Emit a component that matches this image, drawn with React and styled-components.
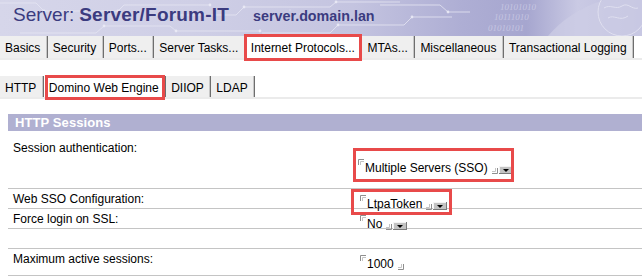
import React from "react";
import styled, { createGlobalStyle, css } from "styled-components";

const GlobalStyle = createGlobalStyle`
  html, body { margin: 0; padding: 0; background: #fff; }
  body {
    font-family: "Liberation Sans", Arial, sans-serif;
    font-size: 12px;
    color: #000;
    width: 642px;
    height: 277px;
    overflow: hidden;
  }
`;

const Page = styled.div`
  width: 642px;
`;

const Banner = styled.header`
  position: relative;
  height: 36px;
  overflow: hidden;
  background: linear-gradient(
    90deg,
    #d6d6ea 0%,
    #cfcfe6 30%,
    #c4c4e0 55%,
    #aeaed4 72%,
    #a6a6cf 82%,
    #cacae4 90%,
    #bcbcdc 100%
  );
`;

const BannerArt = styled.svg`
  position: absolute;
  inset: 0;
`;

const Title = styled.h1`
  position: relative;
  margin: 0;
  padding: 5px 0 0 13px;
  display: flex;
  align-items: baseline;
  font-size: 19px;
  line-height: 19px;
  font-weight: normal;
  color: #3b3b7f;
  white-space: nowrap;
`;

const TitleName = styled.b`
  font-weight: bold;
  margin-left: 5px;
  letter-spacing: 0.2px;
`;

const TitleHost = styled.b`
  font-weight: bold;
  font-size: 14.3px;
  margin-left: 24px;
`;

const TabBar = styled.nav`
  display: flex;
  height: ${(p) => p.$h}px;
  margin-top: ${(p) => p.$mt}px;
  border-bottom: 2px solid #ebebeb;
`;

const Tab = styled.div`
  position: relative;
  padding: 3px 6.5px 0 5px;
  font-size: 12px;
  line-height: 18px;
  white-space: nowrap;
  background: ${(p) => (p.$active ? "#ffffff" : "#efefef")};
  border-right: 1px solid #6e6e6e;
  box-shadow: inset -1px 0 0 #c6c6c6;
  ${(p) =>
    p.$mark &&
    css`
      &::after {
        content: "";
        position: absolute;
        inset: ${p.$mark};
        border: 3px solid #e84a4a;
        pointer-events: none;
      }
    `}
`;

const Section = styled.section`
  margin: 15px 0 0 8px;
`;

const SectionHead = styled.h2`
  margin: 0;
  height: 17px;
  line-height: 17px;
  padding-left: 7px;
  background: #b0b0d1;
  color: #ffffff;
  font-size: 13px;
  font-weight: bold;
  letter-spacing: 0.1px;
`;

const Row = styled.div`
  display: grid;
  grid-template-columns: 343px 1fr;
  height: ${(p) => p.$h}px;
  border-bottom: 1px solid #c4c4c4;
`;

const Label = styled.div`
  padding: ${(p) => p.$pt}px 0 0 5px;
  line-height: 14px;
  white-space: nowrap;
`;

const Value = styled.div`
  padding: ${(p) => p.$pt}px 0 0 ${(p) => p.$pl}px;
`;

const Field = styled.span`
  position: relative;
  display: inline-flex;
  align-items: flex-end;
  height: 16px;
  ${(p) =>
    p.$mark &&
    css`
      &::after {
        content: "";
        position: absolute;
        inset: ${p.$mark};
        border: 3px solid #e84a4a;
        pointer-events: none;
      }
    `}
`;

const FieldText = styled.span`
  line-height: 14px;
  margin-left: 1px;
  white-space: nowrap;
`;

const CornerTL = styled.svg`
  align-self: flex-start;
  flex: none;
`;

const CornerBR = styled.svg`
  flex: none;
  margin: 0 0 1px 4px;
`;

const DropButton = styled.span`
  flex: none;
  display: flex;
  align-items: center;
  justify-content: center;
  width: 14px;
  height: 8px;
  margin: 0 0 1px 1px;
  background: #c3c3c3;
  box-shadow: inset -1px -1px 0 #7a7a7a, inset 1px 1px 0 #f4f4f4;

  &::before {
    content: "";
    width: 0;
    height: 0;
    border-left: 3px solid transparent;
    border-right: 3px solid transparent;
    border-top: 3px solid #000;
  }
`;

function TopLeftMark() {
  return (
    <CornerTL width="6" height="6" viewBox="0 0 6 6">
      <path d="M0.5 6V0.5H6" stroke="#8e8e8e" fill="none" />
      <path d="M2.5 6V2.5H6" stroke="#c4c4c4" fill="none" />
    </CornerTL>
  );
}

function BottomRightMark() {
  return (
    <CornerBR width="6" height="6" viewBox="0 0 6 6">
      <path d="M0 5.5H5.5V0" stroke="#8e8e8e" fill="none" />
      <path d="M0 3.5H3.5V0" stroke="#c4c4c4" fill="none" />
    </CornerBR>
  );
}

function NotesField({ text, dropdown, mark }) {
  return (
    <Field $mark={mark}>
      <TopLeftMark />
      <FieldText>{text}</FieldText>
      <BottomRightMark />
      {dropdown && <DropButton />}
    </Field>
  );
}

function BannerDecoration() {
  return (
    <BannerArt width="642" height="36" viewBox="0 0 642 36">
      <g stroke="#e6e6f3" strokeWidth="1" fill="none" opacity="0.8">
        <path d="M0 3H36L44 11H118L124 5H210" />
        <path d="M20 33H96L104 26H170L176 31H260" />
        <path d="M150 15H236L244 7H330L336 2H400" />
        <path d="M262 33H330L338 25H404L412 17H452" />
        <path d="M380 5H440L448 12H470" />
        <path d="M330 20H372" />
      </g>
      <g fill="#ececf7" opacity="0.85">
        <circle cx="44" cy="11" r="1.4" />
        <circle cx="118" cy="11" r="1.4" />
        <circle cx="104" cy="26" r="1.4" />
        <circle cx="176" cy="31" r="1.4" />
        <circle cx="244" cy="7" r="1.4" />
        <circle cx="336" cy="2" r="1.4" />
        <circle cx="338" cy="25" r="1.4" />
        <circle cx="412" cy="17" r="1.4" />
        <circle cx="372" cy="20" r="1.4" />
        <circle cx="448" cy="12" r="1.4" />
        <circle cx="210" cy="5" r="1.4" />
        <circle cx="260" cy="31" r="1.4" />
      </g>
      <g fill="#dcdcee" opacity="0.6">
        <circle cx="10" cy="20" r="0.9" />
        <circle cx="16" cy="24" r="0.9" />
        <circle cx="70" cy="18" r="0.9" />
        <circle cx="140" cy="20" r="0.9" />
        <circle cx="290" cy="10" r="0.9" />
        <circle cx="300" cy="14" r="0.9" />
      </g>
      <path
        d="M548 36C560 22 578 8 604 0H642V36Z"
        fill="#cdcde6"
        opacity="0.7"
      />
      <g
        fill="#dedef0"
        fontFamily="Liberation Serif, serif"
        fontSize="9"
        fontStyle="italic"
        opacity="0.55"
      >
        <text x="500" y="10">10101010</text>
        <text x="494" y="20">10111010</text>
        <text x="488" y="31">01010101</text>
      </g>
      <g fill="none" stroke="#e4e4f3" strokeWidth="1" opacity="0.85">
        <circle cx="622" cy="12" r="24" />
        <path d="M604 8C610 4 616 10 622 6C628 2 632 10 638 8" />
        <path d="M608 18C614 14 620 22 628 16" />
      </g>
    </BannerArt>
  );
}

const topTabs = [
  { label: "Basics" },
  { label: "Security" },
  { label: "Ports..." },
  { label: "Server Tasks..." },
  { label: "Internet Protocols...", active: true, mark: "-2px -1px -3px -2px" },
  { label: "MTAs..." },
  { label: "Miscellaneous" },
  { label: "Transactional Logging" },
];

const subTabs = [
  { label: "HTTP" },
  { label: "Domino Web Engine", active: true, mark: "-1px 0 -3px 1px" },
  { label: "DIIOP" },
  { label: "LDAP" },
];

const rows = [
  {
    label: "Session authentication:",
    h: 57,
    lpt: 10,
    vpt: 23,
    vpl: 7,
    field: { text: "Multiple Servers (SSO)", dropdown: true, mark: "-11px -1px -7px -5px" },
  },
  {
    label: "Web SSO Configuration:",
    h: 19,
    lpt: 3,
    vpt: 1,
    vpl: 9,
    field: { text: "LtpaToken", dropdown: true, mark: "-6px -5px -4px -9px" },
  },
  {
    label: "Force login on SSL:",
    h: 19,
    lpt: 3,
    vpt: 1,
    vpl: 9,
    field: { text: "No", dropdown: true },
  },
  { label: "", h: 19, lpt: 3, vpt: 1, vpl: 9 },
  {
    label: "Maximum active sessions:",
    h: 26,
    lpt: 3,
    vpt: 1,
    vpl: 9,
    field: { text: "1000" },
  },
];

export default function App() {
  return (
    <Page>
      <GlobalStyle />
      <Banner>
        <BannerDecoration />
        <Title>
          Server:
          <TitleName>Server/Forum-IT</TitleName>
          <TitleHost>server.domain.lan</TitleHost>
        </Title>
      </Banner>

      <TabBar $h={22} $mt={0}>
        {topTabs.map((t) => (
          <Tab key={t.label} $active={t.active} $mark={t.mark}>
            {t.label}
          </Tab>
        ))}
      </TabBar>

      <TabBar $h={21} $mt={16}>
        {subTabs.map((t) => (
          <Tab key={t.label} $active={t.active} $mark={t.mark}>
            {t.label}
          </Tab>
        ))}
      </TabBar>

      <Section>
        <SectionHead>HTTP Sessions</SectionHead>
        {rows.map((r, i) => (
          <Row key={i} $h={r.h}>
            <Label $pt={r.lpt}>{r.label}</Label>
            <Value $pt={r.vpt} $pl={r.vpl}>
              {r.field && <NotesField {...r.field} />}
            </Value>
          </Row>
        ))}
      </Section>
    </Page>
  );
}
